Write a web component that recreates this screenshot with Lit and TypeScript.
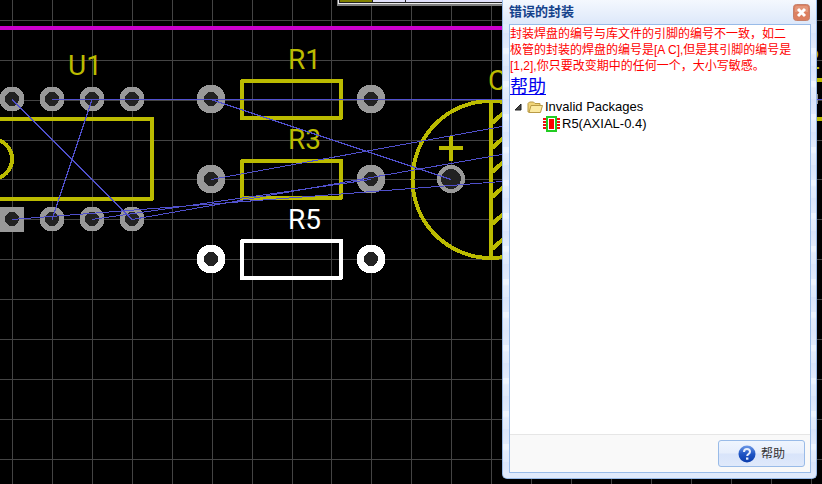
import { LitElement, html, svg, css } from "lit";
import { customElement, property } from "lit/decorators.js";

type Point = [number, number];

const PITCH = 39.92;
const GRID = Array.from({ length: 64 }, (_, i) => i);

const DIP_PADS: Point[] = [
  [12, 99], [52, 99], [92, 99], [132, 99],
  [52, 219], [92, 219], [132, 219],
];

const RESISTORS = [
  { name: "R1", y: 99, tone: "silk" },
  { name: "R3", y: 179, tone: "silk" },
  { name: "R5", y: 259, tone: "picked" },
];

const RATLINES: [Point, Point][] = [
  [[52, 99], [2600, 99]],
  [[12, 99], [132, 219]],
  [[92, 99], [52, 219]],
  [[211, 99], [451, 179]],
  [[211, 179], [502, 126]],
  [[12, 219], [502, 181]],
  [[92, 219], [371, 179]],
  [[132, 219], [502, 154]],
];

const HATCH = [124, 149, 173, 198, 225, 250];

@customElement("pcb-board")
export class PcbBoard extends LitElement {
  static styles = css`
    :host { display: block; background: #000; overflow: hidden; }
    svg { display: block; width: 100%; height: 100%; }
    .grid { stroke: #444; stroke-width: 1; }
    .edge { stroke: #cc00cc; stroke-width: 4; }
    .silk { stroke: #bbbb00; stroke-width: 4; fill: none; stroke-linejoin: round; }
    .picked { stroke: #fff; stroke-width: 4; fill: none; stroke-linejoin: round; }
    .pad { fill: #999; }
    .pad.selected { fill: #fff; }
    .hole { fill: #222; }
    .rat { stroke: #5050cc; stroke-width: 1; }
    .label { font: 28px Roboto, "Liberation Sans", sans-serif; fill: #bbbb00; }
    .label.selected { fill: #fff; }
  `;

  private pad(x: number, y: number, r: number, hole: number, selected = false) {
    return svg`
      <circle class=${selected ? "pad selected" : "pad"} cx=${x} cy=${y} r=${r} />
      <circle class="hole" cx=${x} cy=${y} r=${hole} />`;
  }

  render() {
    return html`
      <svg shape-rendering="crispEdges" role="img" aria-label="PCB">
        ${GRID.map((i) => {
          const x = Math.floor(12.6 + i * PITCH) + 0.5;
          const y = Math.floor(20.3 + i * PITCH) + 0.5;
          return svg`
            <line class="grid" x1=${x} y1="0" x2=${x} y2="100%" />
            <line class="grid" x1="0" y1=${y} x2="100%" y2=${y} />`;
        })}
        <line class="edge" x1="0" y1="28" x2="600" y2="28" />

        <rect x="337" y="0" width="200" height="6" fill="#808080" />
        <rect x="338" y="0" width="200" height="4" fill="#e8e8e8" />
        <rect x="339" y="0" width="200" height="3" fill="#222" />
        <rect x="340" y="0" width="32" height="2" fill="#808000" />
        <rect x="373" y="0" width="32" height="2" fill="#e0e0fa" />
        <rect x="406" y="0" width="120" height="2" fill="#e0e0fa" />

        <rect class="silk" x="-40" y="119" width="192" height="80" />
        <circle class="silk" cx="-8" cy="159" r="20" />
        <rect class="pad" x="0" y="207" width="24" height="25" />
        <circle class="hole" cx="12" cy="219" r="7" />
        ${DIP_PADS.map(([x, y]) => this.pad(x, y, 12.5, 7))}
        <text class="label" x="68" y="75">U1</text>

        ${RESISTORS.map((r) => {
          const selected = r.tone === "picked";
          return svg`
            <rect class=${r.tone} x="242" y=${r.y - 18} width="99" height="37" />
            ${this.pad(211, r.y, 14.5, 7, selected)}
            ${this.pad(371, r.y, 14.5, 7, selected)}
            <text class=${selected ? "label selected" : "label"} x="288" y=${r.y - 30}>${r.name}</text>`;
        })}

        <circle class="silk" cx="491" cy="179.5" r="78.5" />
        <line class="silk" x1="491" y1="101" x2="491" y2="260" />
        ${HATCH.map((y) => svg`<line class="silk" x1="491" y1=${y} x2="520" y2=${y - 26} />`)}
        <path class="silk" d="M439 148h24M451 136v25" />
        ${this.pad(451, 179, 14, 10)}
        <text class="label" x="488" y="90">C1</text>

        <rect class="silk" x="780" y="80" width="99" height="39" />
        ${this.pad(804, 99, 14.5, 7)}
        <text class="label" x="787" y="69">R2</text>

        ${RATLINES.map(([a, b]) => svg`
          <line class="rat" x1=${a[0]} y1=${a[1] + 0.5} x2=${b[0]} y2=${b[1] + 0.5} />`)}
      </svg>`;
  }
}

@customElement("message-window")
export class MessageWindow extends LitElement {
  @property() heading = "";

  static styles = css`
    :host {
      display: flex;
      flex-direction: column;
      box-sizing: border-box;
      border: 1px solid #99bbe8;
      border-top: 0;
      border-radius: 0 0 5px 5px;
      padding: 0 5px 5px 6px;
      background:
        linear-gradient(#f4f8fe, #dde8fa) top / 100% 24px no-repeat,
        linear-gradient(#e0eafb, #e0eafb) bottom / 100% 6px no-repeat,
        repeating-linear-gradient(#dae5fa 0, #e2ebfb 15px, #eff5fe 15px, #eff5fe 20px, #e4edfc 22px, #e0eafb 33px);
      font: 12px/16px "Liberation Sans", "Noto Sans CJK SC", sans-serif;
      color: #000;
    }
    header {
      display: flex;
      align-items: center;
      justify-content: space-between;
      height: 24px;
      padding-right: 1px;
    }
    h1 { margin: 0; font: bold 13px/16px "Liberation Sans", "Noto Sans CJK SC", sans-serif; color: #15428b; }
    button { font: inherit; cursor: pointer; }
    .close { display: block; width: 17px; height: 17px; padding: 0; border: 0; background: none; }
    svg { display: block; flex: none; }
    .body {
      flex: 1;
      display: flex;
      flex-direction: column;
      border: 1px solid #99bbe8;
      background: #fff;
    }
    .content { flex: 1; padding-top: 1px; }
    .warning { margin: 0 0 2px; color: #f00; white-space: nowrap; }
    .help-link {
      display: block;
      width: fit-content;
      font-size: 18px;
      line-height: 22px;
      color: #00e;
      text-decoration: underline;
    }
    ul { list-style: none; margin: 0; padding: 0; font-size: 13px; line-height: 17px; }
    .row { display: flex; align-items: center; gap: 2px; height: 17px; }
    .folder { padding-left: 3px; }
    .leaf { padding-left: 33px; }
    footer {
      display: flex;
      justify-content: flex-end;
      padding: 5px;
      border-top: 1px solid #e6e6e6;
      background: #f9f9f9;
    }
    .help {
      display: flex;
      align-items: center;
      justify-content: center;
      gap: 5px;
      width: 87px;
      height: 27px;
      padding: 0;
      border: 1px solid #99bbe8;
      border-radius: 3px;
      background: linear-gradient(#eff5fe, #e6eefc 48%, #d8e4fa 52%, #dfe9fb);
      color: #333;
    }
  `;

  render() {
    return html`
      <header>
        <h1>${this.heading}</h1>
        <button class="close" aria-label="关闭">
          <svg width="17" height="17" viewBox="0 0 17 17">
            <rect x="0.5" y="0.5" width="16" height="16" rx="3" fill="#dc8060" stroke="#c4806c" />
            <path d="M2 8V3.500Q2 2 3.500 2h10Q15 2 15 3.500V8z" fill="#e2967a" />
            <path d="M5 5l7 7M12 5l-7 7" stroke="#fff" stroke-width="3" />
          </svg>
        </button>
      </header>
      <div class="body">
        <div class="content">
          <p class="warning">
            封装焊盘的编号与库文件的引脚的编号不一致，如二<br />极管的封装的焊盘的编号是[A C],但是其引脚的编号是<br />[1,2],你只要改变期中的任何一个，大小写敏感。
          </p>
          <a class="help-link" href="#help">帮助</a>
          <ul>
            <li>
              <div class="row folder">
                <svg width="12" height="16" viewBox="0 0 12 16">
                  <path d="M8 5v6H2z" fill="#444" stroke="#222" />
                </svg>
                <svg width="16" height="16" viewBox="0 0 16 16">
                  <path d="M1 13V4.500L2.500 3h4L8 4.500h5V13z" fill="#f0d478" stroke="#b99a45" />
                  <path d="M2 13.500L4 6.500h11.500l-2 7z" fill="#fbe9a0" stroke="#b99a45" />
                </svg>
                <span>Invalid Packages</span>
              </div>
              <ul>
                <li class="row leaf">
                  <svg width="17" height="17" viewBox="0 0 17 17">
                    <path d="M0 4h4M0 7h4M0 10h4M0 13h4M13 4h4M13 7h4M13 10h4M13 13h4" stroke="#f01010" stroke-width="2" />
                    <rect x="4" y="2" width="9" height="14" fill="#fff" stroke="#22cc22" stroke-width="2" />
                    <rect x="6" y="4" width="5" height="10" fill="#f00" />
                  </svg>
                  <span>R5(AXIAL-0.4)</span>
                </li>
              </ul>
            </li>
          </ul>
        </div>
        <footer>
          <button class="help">
            <svg width="18" height="18" viewBox="0 0 18 18">
              <defs>
                <linearGradient id="ball" x2="0" y2="1">
                  <stop offset="0" stop-color="#6f9be8" />
                  <stop offset="0.500" stop-color="#1f55c4" />
                  <stop offset="1" stop-color="#0a3cac" />
                </linearGradient>
              </defs>
              <circle cx="9" cy="9" r="8.500" fill="url(#ball)" />
              <path d="M6 7Q6 4 9 4T12 6.800Q12 8.200 10.400 9.200Q9.200 9.900 9.200 11" fill="none" stroke="#e8effc" stroke-width="2" />
              <rect x="8" y="12.500" width="2.400" height="2.200" fill="#e8effc" />
            </svg>
            帮助
          </button>
        </footer>
      </div>`;
  }
}

@customElement("app-root")
export class AppRoot extends LitElement {
  static styles = css`
    :host { display: block; position: relative; height: 100vh; background: #000; overflow: hidden; }
    pcb-board { height: 100%; }
    .dialog { position: absolute; top: 0; right: 5px; bottom: 5px; width: 315px; }
  `;

  render() {
    return html`
      <pcb-board></pcb-board>
      <message-window class="dialog" heading="错误的封装"></message-window>`;
  }
}
